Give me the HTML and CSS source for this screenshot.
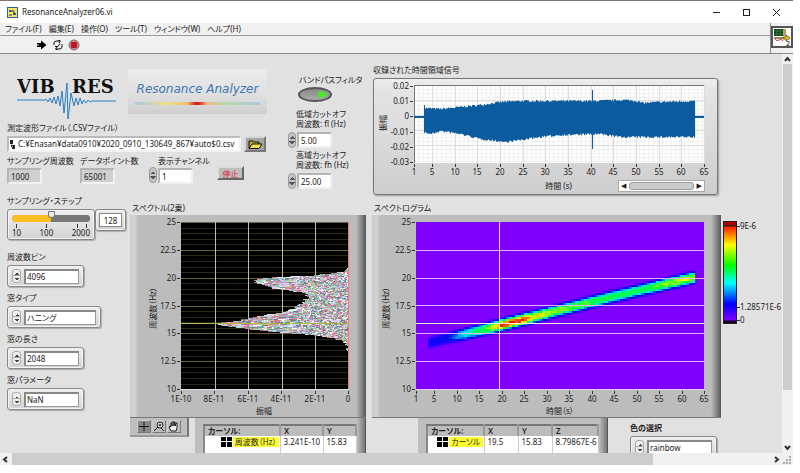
FILE: index.html
```html
<!DOCTYPE html>
<html lang="ja">
<head>
    <meta charset="UTF-8">
    <meta name="viewport" content="width=device-width, initial-scale=1.0">
    <title>ResonanceAnalyzer06.vi</title>
    <link rel="stylesheet" href="styles.css">
</head>
<body>
    <div class="window">
        <header class="title-bar">
            <svg class="app-icon" width="11" height="11" viewBox="0 0 11 11">
                <rect x="0.5" y="0.5" width="10" height="10" fill="#f3e36b" stroke="#2263a5"/>
                <path d="M2 3h3v2H2zM6 6h3v2H6z" fill="#2b6a8e"/>
                <path d="M5 4h2v3M2 8h3" fill="none" stroke="#333"/>
            </svg>
            <span class="title">ResonanceAnalyzer06.vi</span>
            <div class="window-buttons">
                <button aria-label="最小化"><svg width="9" height="9"><path d="M1 4.500h7" stroke="#222"/></svg></button>
                <button aria-label="最大化"><svg width="9" height="9"><rect x="1.500" y="1.500" width="6" height="6" fill="none" stroke="#222"/></svg></button>
                <button aria-label="閉じる"><svg width="9" height="9"><path d="M1 1l7 7M8 1l-7 7" stroke="#222"/></svg></button>
            </div>
        </header>

        <div class="bars">
            <div class="bars-main">
                <nav class="menu">
                    <a href="#">ファイル(F)</a>
                    <a href="#">編集(E)</a>
                    <a href="#">操作(O)</a>
                    <a href="#">ツール(T)</a>
                    <a href="#">ウィンドウ(W)</a>
                    <a href="#">ヘルプ(H)</a>
                </nav>
                <div class="toolbar">
                    <button aria-label="実行"><svg width="12" height="10" viewBox="0 0 12 10"><path d="M1 3h4V0.500L10.500 5 5 9.500V7H1z" fill="#000"/><path d="M1 4h2v2H1z" fill="#777"/></svg></button>
                    <button aria-label="連続実行"><svg width="12" height="10" viewBox="0 0 12 10"><path d="M2 5V3q0-2 3-2h3M6 0l2.500 1L7 3M10 4v3q0 2-3 2H4M6 10L3.500 9 5 7M3 6.500h3l2-3" fill="none" stroke="#111"/></svg></button>
                    <button aria-label="中断"><svg width="12" height="12" viewBox="0 0 12 12"><circle cx="6" cy="6" r="5" fill="#d8808a" stroke="#777"/><rect x="3" y="3" width="6" height="6" rx="1" fill="#b81924"/></svg></button>
                </div>
            </div>
            <div class="vi-icon">
                <svg width="22" height="22" viewBox="0 0 22 22">
                    <rect x="1" y="1" width="20" height="20" fill="#fff" stroke="#555" stroke-width="2"/>
                    <rect x="3" y="3" width="9" height="7" fill="#123e18"/>
                    <path d="M3 5h9M3 8h9M6 3v7M9 3v7" stroke="#2d7a38"/>
                    <rect x="12" y="3" width="3" height="7" fill="#b99a6a"/>
                    <path d="M3 11h12v2H3z" fill="#9b8a55"/>
                    <path d="M4 13q2 3 4 1t4 1" fill="none" stroke="#d04060"/>
                    <path d="M12 11h3V9l4 3-4 3v-2h-3z" fill="#efc91f" stroke="#7a6410"/>
                    <text x="15" y="20" class="vi-number">2</text>
                </svg>
            </div>
        </div>

        <div class="workspace">
            <main class="panel">
                <section class="top-row">
                    <div class="setup">
                        <div class="brand">
                            <svg class="logo" width="102" height="44" viewBox="0 0 102 44">
                                <text x="0" y="17" class="logo-text">VIB</text>
                                <text x="55" y="17" class="logo-text">RES</text>
                                <path d="M0 24H28l1-1 2 3 2-4 2 5 2-6 2 7 2-8 2 10 2-15 2 22 3-30 1 36 3-26 3 13 2-8 2 7 2-7 2 6 2-4 2 3 2-3 2 2 2-1H99" fill="none" stroke="#2b7fc0"/>
                            </svg>
                            <div class="banner">
                                <span>Resonance Analyzer</span>
                                <i class="banner-line"></i>
                            </div>
                        </div>
                        <label class="path-label" for="csv-path">測定波形ファイル（.CSVファイル）</label>
                        <div class="path-row">
                            <div class="path-box">
                                <svg width="5" height="11" viewBox="0 0 5 11"><path d="M0 1h3v4H0zM2 6h3v4H2zM1 5v3h2" fill="#222"/></svg>
                                <input id="csv-path" value="C:¥Enasan¥data0910¥2020_0910_130649_867¥auto$0.csv">
                            </div>
                            <button class="folder" aria-label="参照">
                                <svg width="15" height="11" viewBox="0 0 15 11"><path d="M1 9V2h4l1 1h5v2" fill="#b8a832" stroke="#111"/><path d="M1 9.500L4 5h10l-3 4.500z" fill="#f0e14a" stroke="#111"/></svg>
                            </button>
                        </div>
                        <div class="readouts">
                            <div class="readout">
                                <label for="rate">サンプリング周波数</label>
                                <input id="rate" class="indicator" value="1000" readonly>
                            </div>
                            <div class="readout">
                                <label for="points">データポイント数</label>
                                <input id="points" class="indicator" value="65001" readonly>
                            </div>
                            <div class="readout channel">
                                <label for="channel">表示チャンネル</label>
                                <div class="numeric"><i class="spin"></i><input id="channel" value="1"></div>
                            </div>
                            <button class="stop">停止</button>
                        </div>
                    </div>

                    <div class="filter">
                        <label class="filter-title" for="bandpass">バンドパスフィルタ</label>
                        <input id="bandpass" class="led-switch" type="checkbox" checked>
                        <label for="low-cut">低域カットオフ<br>周波数: fl (Hz)</label>
                        <div class="numeric"><i class="spin"></i><input id="low-cut" value="5.00"></div>
                        <label for="high-cut">高域カットオフ<br>周波数: fh (Hz)</label>
                        <div class="numeric"><i class="spin"></i><input id="high-cut" value="25.00"></div>
                    </div>

                    <div class="signal">
                        <h2>収録された時間領域信号</h2>
                        <div class="signal-box">
                            <svg id="signal-plot" class="plot" viewBox="0 0 343 100"></svg>
                            <div class="signal-foot">
                                <span>時間 (s)</span>
                                <div class="mini-scroll">
                                    <button aria-label="前へ">◀</button>
                                    <i></i>
                                    <button aria-label="次へ">▶</button>
                                </div>
                            </div>
                        </div>
                    </div>
                </section>

                <section class="bottom-row">
                    <div class="controls">
                        <label for="step">サンプリング・ステップ</label>
                        <div class="step-row">
                            <div class="slider-box">
                                <input id="step" type="range" min="0" max="100" value="50">
                                <div class="slider-ticks"><i></i><i></i><i></i><i></i></div>
                                <div class="slider-scale"><span>10</span><span>100</span><span>2000</span></div>
                            </div>
                            <div class="step-value"><input aria-label="ステップ値" value="128"></div>
                        </div>
                        <label for="bins">周波数ビン</label>
                        <div class="ring"><i class="updown"></i><select id="bins"><option>4096</option></select></div>
                        <label for="window-type">窓タイプ</label>
                        <div class="ring wide"><i class="updown"></i><select id="window-type"><option>ハニング</option></select></div>
                        <label for="window-length">窓の長さ</label>
                        <div class="ring"><i class="updown"></i><select id="window-length"><option>2048</option></select></div>
                        <label for="window-param">窓パラメータ</label>
                        <div class="ring"><i class="updown"></i><input id="window-param" value="NaN"></div>
                    </div>

                    <div class="spectrum">
                        <h2>スペクトル(2乗)</h2>
                        <div class="bezel">
                            <svg id="spectrum-plot" class="plot" viewBox="0 0 236 202"></svg>
                        </div>
                        <div class="below">
                            <div class="palette">
                                <button class="active" aria-label="カーソル移動"><svg width="12" height="11"><path d="M6 1v9M1 5.500h10" stroke="#111"/></svg></button>
                                <button aria-label="ズーム"><svg width="12" height="11"><circle cx="7" cy="4" r="3" fill="#eee" stroke="#222"/><path d="M5 6l-4 4M5.500 4h3M7 2.500v3M8 7l3 3" stroke="#222"/></svg></button>
                                <button aria-label="パン"><svg width="12" height="11"><path d="M3 10L1 6l1-1 1 1V2h1v3-4h2v4-4h1v4l1-3h1v5l-1 3z" fill="#eee" stroke="#222"/></svg></button>
                            </div>
                            <div class="cursor-box">
                                <table class="cursors">
                                    <tr><th class="name">カーソル:</th><th class="x">X</th><th>Y</th></tr>
                                    <tr><td><div class="cursor-name"><i class="cross"></i><mark>周波数（Hz）</mark></div></td><td>3.241E-10</td><td>15.83</td></tr>
                                    <tr><td></td><td></td><td></td></tr>
                                </table>
                            </div>
                        </div>
                    </div>

                    <div class="spectrogram">
                        <h2>スペクトログラム</h2>
                        <div class="bezel">
                            <svg id="spectrogram-plot" class="plot" viewBox="0 0 349 202"></svg>
                        </div>
                        <div class="below">
                            <div class="cursor-box second">
                                <table class="cursors">
                                    <tr><th class="name">カーソル:</th><th class="x">X</th><th class="y">Y</th><th>Z</th></tr>
                                    <tr><td><div class="cursor-name"><i class="cross"></i><mark>カーソル</mark></div></td><td>19.5</td><td>15.83</td><td>8.79867E-6</td></tr>
                                    <tr><td></td><td></td><td></td><td></td></tr>
                                </table>
                            </div>
                            <div class="color-choice">
                                <label for="colors">色の選択</label>
                                <div class="ring"><i class="updown"></i><select id="colors"><option>rainbow</option></select></div>
                            </div>
                        </div>
                    </div>

                    <div class="ramp">
                        <i class="ramp-bar"></i>
                        <div class="ramp-labels"><span>9E-6</span><span class="low">1.28571E-6</span><span>0</span></div>
                    </div>
                </section>
            </main>
            <div class="v-scroll">
                <svg width="9" height="9"><path d="M2 6l2.500-3L7 6" fill="none" stroke="#333" stroke-width="2"/></svg>
                <i class="thumb"></i>
                <svg class="end" width="9" height="9"><path d="M2 3l2.500 3L7 3" fill="none" stroke="#333" stroke-width="2"/></svg>
            </div>
        </div>
        <div class="h-scroll">
            <svg width="9" height="9"><path d="M6 2L3 4.500 6 7" fill="none" stroke="#333" stroke-width="2"/></svg>
            <i class="thumb"></i>
            <svg class="end" width="9" height="9"><path d="M3 2l3 2.500L3 7" fill="none" stroke="#333" stroke-width="2"/></svg>
            <svg class="grip" width="9" height="9"><path d="M6 2h2M3 5h2M6 5h2M0 8h2M3 8h2M6 8h2" stroke="#aaa" stroke-width="2"/></svg>
        </div>
    </div>
    <script src="script.js"></script>
</body>
</html>
```

FILE: styles.css
```css
* {
    box-sizing: border-box;
}
body {
    margin: 0;
    background: #fff;
    color: #222;
    font-family: "Noto Sans", "Noto Sans CJK JP", sans-serif;
    font-size: 8px;
    line-height: 10px;
    font-feature-settings: "palt";
}
input, select, button {
    margin: 0;
    padding: 0;
    border: none;
    border-radius: 0;
    background: none;
    color: inherit;
    font: inherit;
    font-feature-settings: inherit;
    appearance: none;
}
input, select {
    min-width: 0;
    width: 100%;
}
svg {
    display: block;
    flex: none;
}
h2 {
    margin: 0;
    font-size: 8px;
    font-weight: normal;
    line-height: 10px;
}
label {
    display: block;
    white-space: nowrap;
}
.window {
    display: flex;
    flex-direction: column;
    height: 100vh;
    padding: 0 7px 8px 0;
    overflow: hidden;
}

/* title, menu and toolbar */
.title-bar {
    display: flex;
    align-items: center;
    flex: none;
    height: 23px;
    padding-left: 7px;
    border-top: 1px solid #777;
}
.title {
    margin-left: 4px;
}
.window-buttons {
    display: flex;
    gap: 21px;
    margin-left: auto;
    padding-right: 12px;
}
.bars {
    display: flex;
    flex: none;
    height: 31px;
    background: #f0f0f0;
    border-bottom: 1px solid #888;
}
.bars-main {
    flex: 1;
}
.menu {
    display: flex;
    gap: 7px;
    height: 13px;
    padding-left: 5px;
    border-bottom: 1px solid #999;
}
.menu a {
    color: inherit;
    text-decoration: none;
    line-height: 12px;
}
.toolbar {
    display: flex;
    align-items: center;
    gap: 4px;
    height: 17px;
    padding-left: 36px;
}
.vi-icon {
    padding-top: 3px;
    border-left: 1px solid #888;
}
.vi-number {
    font-size: 7px;
}

/* front panel */
.workspace {
    display: flex;
    flex: 1;
    min-height: 0;
}
.panel {
    flex: 1;
    min-width: 0;
    overflow: hidden;
    background: #e1e1e1;
}
.top-row {
    display: flex;
    height: 140px;
}
.setup {
    width: 272px;
    padding: 15px 0 0 7px;
    flex: none;
}
.brand {
    display: flex;
    gap: 9px;
    padding-left: 10px;
}
.logo {
    margin-top: 7px;
}
.logo-text {
    font-family: "DejaVu Serif", serif;
    font-size: 18px;
    font-weight: bold;
    fill: #111;
}
.banner {
    width: 139px;
    height: 45px;
    padding: 13px 7px 0;
    background: linear-gradient(#ececec, #dedede 60%, #cfcfcf);
    text-align: center;
    white-space: nowrap;
}
.banner span {
    display: block;
    color: #3f78b4;
    font-family: "DejaVu Sans", sans-serif;
    font-size: 12px;
    font-style: italic;
    line-height: 14px;
}
.banner-line {
    display: block;
    height: 3px;
    margin-top: 6px;
    background: linear-gradient(90deg, #a9c8e0, #eee08a 25%, #efc06a 42%, #d8202a 48%, #d8202a 51%, #e8c080 58%, #b5d8ae 75%, #a9c8e0);
}
.path-label {
    margin: 3px 0 3px;
}
.path-row {
    display: flex;
    gap: 3px;
}
.path-box {
    display: flex;
    align-items: center;
    gap: 3px;
    width: 234px;
    height: 16px;
    padding: 0 0 0 1px;
    background: #fff;
    border: 2px solid #bbb;
    border-right-color: #f2f2f2;
    border-bottom-color: #f2f2f2;
}
.folder {
    display: flex;
    align-items: center;
    justify-content: center;
    width: 22px;
    height: 16px;
    background: #a4a4a4;
    border: 2px solid #d8d8d8;
    border-right-color: #777;
    border-bottom-color: #777;
}
.readouts {
    display: flex;
    padding-top: 4px;
}
.readout {
    width: 73px;
}
.readout input {
    display: block;
    width: 35px;
    height: 16px;
    margin-top: 2px;
    padding: 0 2px;
    border: 2px solid #b4b4b4;
    border-right-color: #f0f0f0;
    border-bottom-color: #f0f0f0;
}
.readout .indicator {
    background: #cfcfcf;
}
.channel {
    width: 64px;
}
.channel label {
    padding-left: 5px;
}
.channel .numeric {
    margin-left: -4px;
}
.stop {
    width: 27px;
    height: 14px;
    margin-top: 10px;
    background: #bdbdbd;
    border: 2px solid #ddd;
    border-right-color: #666;
    border-bottom-color: #666;
    color: #e0202a;
    line-height: 9px;
}
.numeric {
    display: flex;
    align-items: center;
    gap: 1px;
}
.numeric input {
    width: 35px;
    height: 16px;
    padding: 0 2px;
    background: #fff;
    border: 2px solid #b4b4b4;
    border-right-color: #f0f0f0;
    border-bottom-color: #f0f0f0;
}
.spin {
    width: 8px;
    height: 16px;
    flex: none;
    border: 1px solid #999;
    border-radius: 4px;
    background:
        conic-gradient(from 135deg at 50% 0, #555 90deg, transparent 0) 50% 3px / 6px 3px no-repeat,
        conic-gradient(from -45deg at 50% 100%, #555 90deg, transparent 0) 50% 8px / 6px 3px no-repeat,
        #c4c4c4;
}
.filter {
    width: 100px;
    flex: none;
    padding: 21px 0 0 16px;
}
.filter label {
    padding-left: 8px;
}
.filter .filter-title {
    padding-left: 11px;
}
.led-switch {
    display: block;
    width: 34px;
    height: 15px;
    margin: 2px 0 7px 10px;
    border: 2px solid #555;
    border-radius: 50%;
    background: linear-gradient(#888, #aaa);
}
.led-switch:checked::after {
    content: "";
    display: block;
    width: 10px;
    height: 7px;
    margin: 2px 0 0 18px;
    background: #4be82f;
    clip-path: polygon(0 0, 40% 0, 100% 50%, 40% 100%, 0 100%);
}
.filter .numeric {
    margin: 3px 0 2px;
}
.signal {
    flex: 1;
    min-width: 0;
    padding: 11px 64px 0 1px;
}
.signal-box {
    margin-top: 3px;
    border: 1px solid #777;
    border-radius: 3px;
    background: linear-gradient(#eee, #e4e4e4 10%, #cecece);
    box-shadow: 1px 1px 2px #999;
}
.plot {
    width: 100%;
    height: auto;
}
.plot text {
    fill: #222;
    font-size: 8px;
}
.signal-foot {
    display: flex;
    justify-content: flex-end;
    align-items: center;
    gap: 46px;
    height: 15px;
    padding: 0 12px 2px 0;
}
.mini-scroll {
    display: flex;
    align-items: center;
    width: 87px;
    height: 12px;
    padding: 0 2px;
    background: #fff;
    border: 1px solid #aaa;
}
.mini-scroll i {
    flex: 1;
    height: 8px;
    margin: 0 3px;
    border: 1px solid #999;
    border-radius: 3px;
    background: #ccc;
}
.mini-scroll button {
    font-family: "DejaVu Sans", sans-serif;
    font-size: 7px;
    line-height: 8px;
}

.bottom-row {
    display: flex;
}
.controls {
    width: 130px;
    flex: none;
    padding: 2px 0 0 7px;
}
.step-row {
    display: flex;
    align-items: flex-start;
    margin: 3px 0 12px;
}
.slider-box, .step-value, .ring {
    border: 1px solid #888;
    border-radius: 3px;
    background: linear-gradient(#eee, #d4d4d4);
    box-shadow: inset 0 0 0 1px #f4f4f4, 1px 1px 1px #aaa;
}
.slider-box {
    width: 88px;
    height: 31px;
    padding: 3px 4px 0;
}
.slider-box input {
    display: block;
    height: 11px;
}
.slider-box input::-webkit-slider-runnable-track {
    height: 7px;
    border-radius: 3px;
    background: linear-gradient(90deg, #fbbd24 50%, #777 50%);
}
.slider-box input::-webkit-slider-thumb {
    appearance: none;
    width: 7px;
    height: 7px;
    margin-top: -4px;
    border: 1px solid #777;
    border-radius: 1px 1px 4px 4px;
    background: #eee;
}
.slider-ticks {
    display: grid;
    grid-template-columns: 30px 31px 9px 1px;
    padding-left: 4px;
}
.slider-ticks i {
    width: 1px;
    height: 4px;
    background: #333;
}
.slider-scale {
    display: flex;
    justify-content: space-between;
    line-height: 9px;
}
.step-value {
    width: 31px;
    height: 22px;
    padding: 3px;
}
.step-value input {
    display: block;
    height: 14px;
    background: #fff;
    border: 1px solid #888;
    text-align: center;
}
.ring {
    display: flex;
    align-items: center;
    gap: 3px;
    width: 77px;
    height: 22px;
    margin: 3px 0 6px;
    padding: 0 4px;
}
.ring.wide {
    width: 94px;
}
.ring select, .ring input {
    height: 15px;
    padding: 0 1px;
    background: #fff;
    border: 1px solid #999;
    border-top: 2px solid #888;
    border-left: 2px solid #888;
}
.updown {
    width: 9px;
    height: 14px;
    flex: none;
    border: 1px solid #aaa;
    border-radius: 3px;
    background:
        conic-gradient(from 135deg at 50% 0, #444 90deg, transparent 0) 50% 3px / 4px 2px no-repeat,
        conic-gradient(from -45deg at 50% 100%, #444 90deg, transparent 0) 50% 8px / 4px 2px no-repeat,
        linear-gradient(#eee 5px, #aaa 5px, #aaa 6px, #eee 6px);
}

/* graphs */
.spectrum {
    flex: 236 1 0;
    min-width: 0;
}
.spectrogram {
    flex: 349 1 0;
    min-width: 0;
    margin-left: 6px;
}
.spectrum h2, .spectrogram h2 {
    padding: 9px 0 2px 2px;
    line-height: 10px;
}
.bezel {
    background: linear-gradient(90deg, #ccc, #d2d2d2 5px, #bcbcbc 8px, #bcbcbc calc(100% - 10px), #777 calc(100% - 3px), #555);
    border-bottom: 1px solid #777;
}
.below {
    display: flex;
    align-items: flex-start;
    height: 40px;
}
.palette {
    display: flex;
    gap: 1px;
    width: 59px;
    padding: 2px 7px;
    background: #bebebe;
    border-right: 2px solid #777;
    border-bottom: 2px solid #999;
}
.palette button {
    border: 1px solid #ccc;
    border-right-color: #777;
    border-bottom-color: #777;
}
.palette .active {
    background: #888;
}
.cursor-box {
    flex: 1;
    height: 40px;
    margin-left: 6px;
    padding: 6px 8px 0;
    background: linear-gradient(90deg, #bebebe calc(100% - 8px), #777);
    border-right: 1px solid #555;
}
.cursor-box.second {
    flex: none;
    width: 190px;
    margin-left: 46px;
}
.cursors {
    width: 100%;
    table-layout: fixed;
    border-collapse: collapse;
    border-top: 2px solid #777;
    border-left: 2px solid #888;
}
.cursors th {
    height: 11px;
    padding: 0 3px;
    background: #bcbcbc;
    border-right: 2px solid #999;
    text-align: left;
    font-weight: 600;
}
.cursors td {
    height: 11px;
    padding: 0 1px 0 3px;
    background: #fff;
    border-right: 1px solid #ccc;
    white-space: nowrap;
}
.cursors .name {
    width: 76px;
}
.cursors .x {
    width: 43px;
}
.second .cursors .name {
    width: 57px;
}
.second .cursors .x, .second .cursors .y {
    width: 34px;
}
.cursor-name {
    display: flex;
    justify-content: flex-end;
    gap: 1px;
}
.cross {
    width: 11px;
    height: 10px;
    flex: none;
    background:
        linear-gradient(#fff, #fff) 50% 50% / 1px 100% no-repeat,
        linear-gradient(#fff, #fff) 50% 50% / 100% 1px no-repeat,
        #000;
}
mark {
    padding: 0 2px;
    background: #ffff30;
    color: inherit;
}
.color-choice {
    width: 87px;
    margin-left: 22px;
    padding-top: 5px;
    font-weight: 600;
}
.color-choice .ring {
    width: 87px;
    font-weight: normal;
}
.ramp {
    display: flex;
    width: 61px;
    flex: none;
    padding: 27px 0 0 2px;
}
.ramp-bar {
    width: 14px;
    height: 103px;
    flex: none;
    border: 1px solid #222;
    background: linear-gradient(#b00000 3px, #222 3px, #222 4px, #ff2000 5px, #ffff00 23px, #00ff00 43px, #00ffff 61px, #0000ff 82px, #8000ff 98px, #100020 99px);
}
.ramp-labels {
    display: flex;
    flex-direction: column;
    line-height: 10px;
    white-space: nowrap;
}
.ramp-labels span::before {
    content: "";
    display: inline-block;
    width: 3px;
    height: 1px;
    background: #333;
    vertical-align: 2px;
}
.ramp-labels .low {
    margin: 71px 0 3px;
}

/* scroll bars */
.v-scroll {
    display: flex;
    flex-direction: column;
    width: 11px;
    flex: none;
    padding: 1px;
    background: #f0f0f0;
}
.v-scroll .thumb {
    flex: 0 0 82%;
    background: #cdcdcd;
}
.h-scroll {
    display: flex;
    align-items: center;
    gap: 2px;
    height: 12px;
    flex: none;
    padding: 0 1px;
    background: #f0f0f0;
}
.h-scroll .thumb {
    width: 81%;
    height: 12px;
    background: #cdcdcd;
}
.v-scroll .end {
    margin-top: auto;
}
.h-scroll .end {
    margin-left: auto;
}
```

FILE: script.js
```javascript
let seed = 7;

function rand() {
    seed = (seed * 16807) % 2147483647;
    return seed / 2147483647;
}

// linear interpolation over [[x, y], ...]
function lerp(points, x) {
    for (let i = 1; i < points.length; i++) {
        if (x <= points[i][0]) {
            const [x0, y0] = points[i - 1];
            const [x1, y1] = points[i];
            return y0 + (y1 - y0) * (x - x0) / (x1 - x0);
        }
    }
    return points[points.length - 1][1];
}

function rect(x, y, w, h, fill) {
    return `<rect x="${x}" y="${y}" width="${w}" height="${h}" fill="${fill}"/>`;
}

function text(x, y, value, anchor = 'middle') {
    return `<text x="${x}" y="${y}" text-anchor="${anchor}">${value}</text>`;
}

function xAxis(x0, x1, y, labels) {
    const first = labels[0];
    const span = labels[labels.length - 1] - first;
    return labels.map(v => {
        const x = Math.round(x0 + (x1 - x0) * (v - first) / span);
        return rect(x, y + 1, 1, 3, '#333') + text(x, y + 12, v);
    }).join('');
}

function yAxis(x, y0, y1, labels) {
    return labels.map((v, i) => {
        const y = Math.round(y0 + (y1 - y0) * i / (labels.length - 1));
        return rect(x - 4, y, 3, 1, '#333') + text(x - 5, y + 3, v, 'end');
    }).join('');
}

function sideTitle(x, y, value) {
    return `<text transform="translate(${x} ${y}) rotate(-90)" text-anchor="middle">${value}</text>`;
}

const seconds = [1, 5, 10, 15, 20, 25, 30, 35, 40, 45, 50, 55, 60, 65];
const hertz = [25, 22.5, 20, 17.5, 15, 12.5, 10];

function drawSignal() {
    const upper = [[50, 30], [66, 31], [86, 29], [106, 27], [126, 24], [146, 23], [216, 23], [251, 22], [262, 23], [268, 25], [285, 24], [321, 23]];
    const lower = [[50, 52], [56, 54], [66, 51], [86, 54], [106, 59], [131, 62], [146, 60], [166, 57], [186, 55], [226, 54], [246, 57], [286, 57], [321, 57]];
    let out = rect(40, 6, 290, 78, '#fff');
    for (let x = 40; x < 330; x += 4.5) out += rect(x, 6, 1, 78, '#f0f0f0');
    for (let y = 10; y < 84; y += 4) out += rect(40, y, 290, 1, '#f0f0f0');
    seconds.forEach(v => { out += rect(Math.round(40 + (v - 1) * 4.53), 6, 1, 78, '#ddd'); });
    for (let i = 1; i < 5; i++) out += rect(40, 6 + i * 15, 290, 1, '#ddd');
    out += rect(40, 6, 290, 1, '#777') + rect(40, 6, 1, 78, '#777');
    out += rect(40, 37, 290, 2, '#0b5c9e');
    for (let x = 50; x < 321; x++) {
        const top = lerp(upper, x) - rand() * 2;
        const bottom = lerp(lower, x) + rand() * 2;
        out += rect(x, top, 1.1, bottom - top, '#0b5c9e');
    }
    out += rect(50, 26, 1, 28, '#0b5c9e') + rect(218, 11, 1, 59, '#0b5c9e');
    out += xAxis(40, 330, 84, seconds);
    out += yAxis(40, 7, 83, ['0.02', '0.01', '0', '-0.01', '-0.02', '-0.03']);
    out += sideTitle(12, 44, '振幅');
    document.getElementById('signal-plot').innerHTML = out;
}

function drawSpectrum() {
    // left edge of the trace for each row
    const edge = [[50, 218], [54, 216], [57, 208], [60, 180], [62, 140], [64, 124], [66, 122], [70, 132], [73, 141], [75, 158], [78, 173], [81, 176], [86, 173], [92, 164], [97, 150], [101, 126], [105, 107], [108, 83], [110, 91], [113, 113], [116, 135], [119, 172], [122, 197], [125, 211], [130, 216], [138, 218]];
    const colors = ['#fff', '#d8d8e8', '#e08aa0', '#8ccf9c', '#a49be0', '#b7d9e8', '#777', '#e5b8e0', '#b6c486', '#5ba396', '#d0708c'];
    let out = rect(51, 7, 168, 168, '#000');
    for (let i = 0; i <= 30; i++) {
        out += rect(51, Math.round(7 + i * 5.57), 168, 1, i % 5 ? '#29291a' : '#66663c');
    }
    for (let i = 1; i < 5; i++) out += rect(Math.round(51 + i * 33.5), 7, 1, 168, '#bbb');
    for (let y = 50; y < 138; y++) {
        let x = Math.round(lerp(edge, y) + rand() * 5 - 1);
        while (x < 218) {
            const wide = x < 165 ? 5 : 2;
            const w = Math.min(1 + Math.floor(rand() * wide), 218 - x);
            out += rect(x, y, w, 1, colors[Math.floor(rand() * colors.length)]);
            x += w;
        }
    }
    out += rect(51, 108, 168, 1, '#b5b54a') + rect(218, 7, 1, 168, '#ff7070') + rect(51, 174, 168, 1, '#ddd');
    ['1E-10', '8E-11', '6E-11', '4E-11', '2E-11', '0'].forEach((v, i) => {
        const x = Math.round(51 + i * 33.4);
        out += rect(x, 176, 1, 3, '#333') + text(x, 187, v);
    });
    out += yAxis(51, 7, 174, hertz) + sideTitle(26, 93, '周波数（Hz）') + text(134, 199, '振幅');
    document.getElementById('spectrum-plot').innerHTML = out;
}

function rainbow(v) {
    const stops = [[0, 128, 0, 255], [0.12, 20, 0, 255], [0.22, 0, 20, 220], [0.4, 0, 230, 255], [0.6, 0, 255, 60], [0.78, 230, 255, 0], [1, 240, 20, 0]];
    const channel = n => Math.round(lerp(stops.map(s => [s[0], s[n]]), v));
    return `rgb(${channel(1)},${channel(2)},${channel(3)})`;
}

function drawSpectrogram() {
    const ridge = [[55, 128], [128, 110], [238, 82], [323, 62]];
    const level = [[55, 0.13], [74, 0.18], [86, 0.38], [106, 0.58], [118, 0.75], [130, 0.98], [150, 0.95], [160, 0.78], [190, 0.7], [230, 0.6], [266, 0.57], [284, 0.66], [300, 0.72], [323, 0.77]];
    let out = rect(44, 7, 288, 168, '#8000ff');
    for (let x = 56; x < 323; x += 3) {
        for (let y = 50; y < 138; y += 2) {
            const distance = Math.abs(y + 1 - lerp(ridge, x)) / 5.2;
            const v = lerp(level, x) * Math.exp(-Math.pow(distance, 3)) * (0.9 + rand() * 0.18);
            if (v > 0.02) out += rect(x, y, 3.1, 2.1, rainbow(v));
        }
    }
    for (let i = 1; i < 6; i++) out += rect(44, Math.round(7 + i * 27.8), 288, 1, '#e2b4f4');
    out += rect(44, 108, 288, 1, '#fff0d0') + rect(127, 7, 1, 168, '#fff0d0') + rect(44, 174, 288, 1, '#e8c8ff');
    out += xAxis(44, 332, 175, seconds) + yAxis(44, 7, 174, hertz);
    out += sideTitle(17, 93, '周波数（Hz）') + text(188, 199, '時間（s）');
    document.getElementById('spectrogram-plot').innerHTML = out;
}

drawSignal();
drawSpectrum();
drawSpectrogram();
```
